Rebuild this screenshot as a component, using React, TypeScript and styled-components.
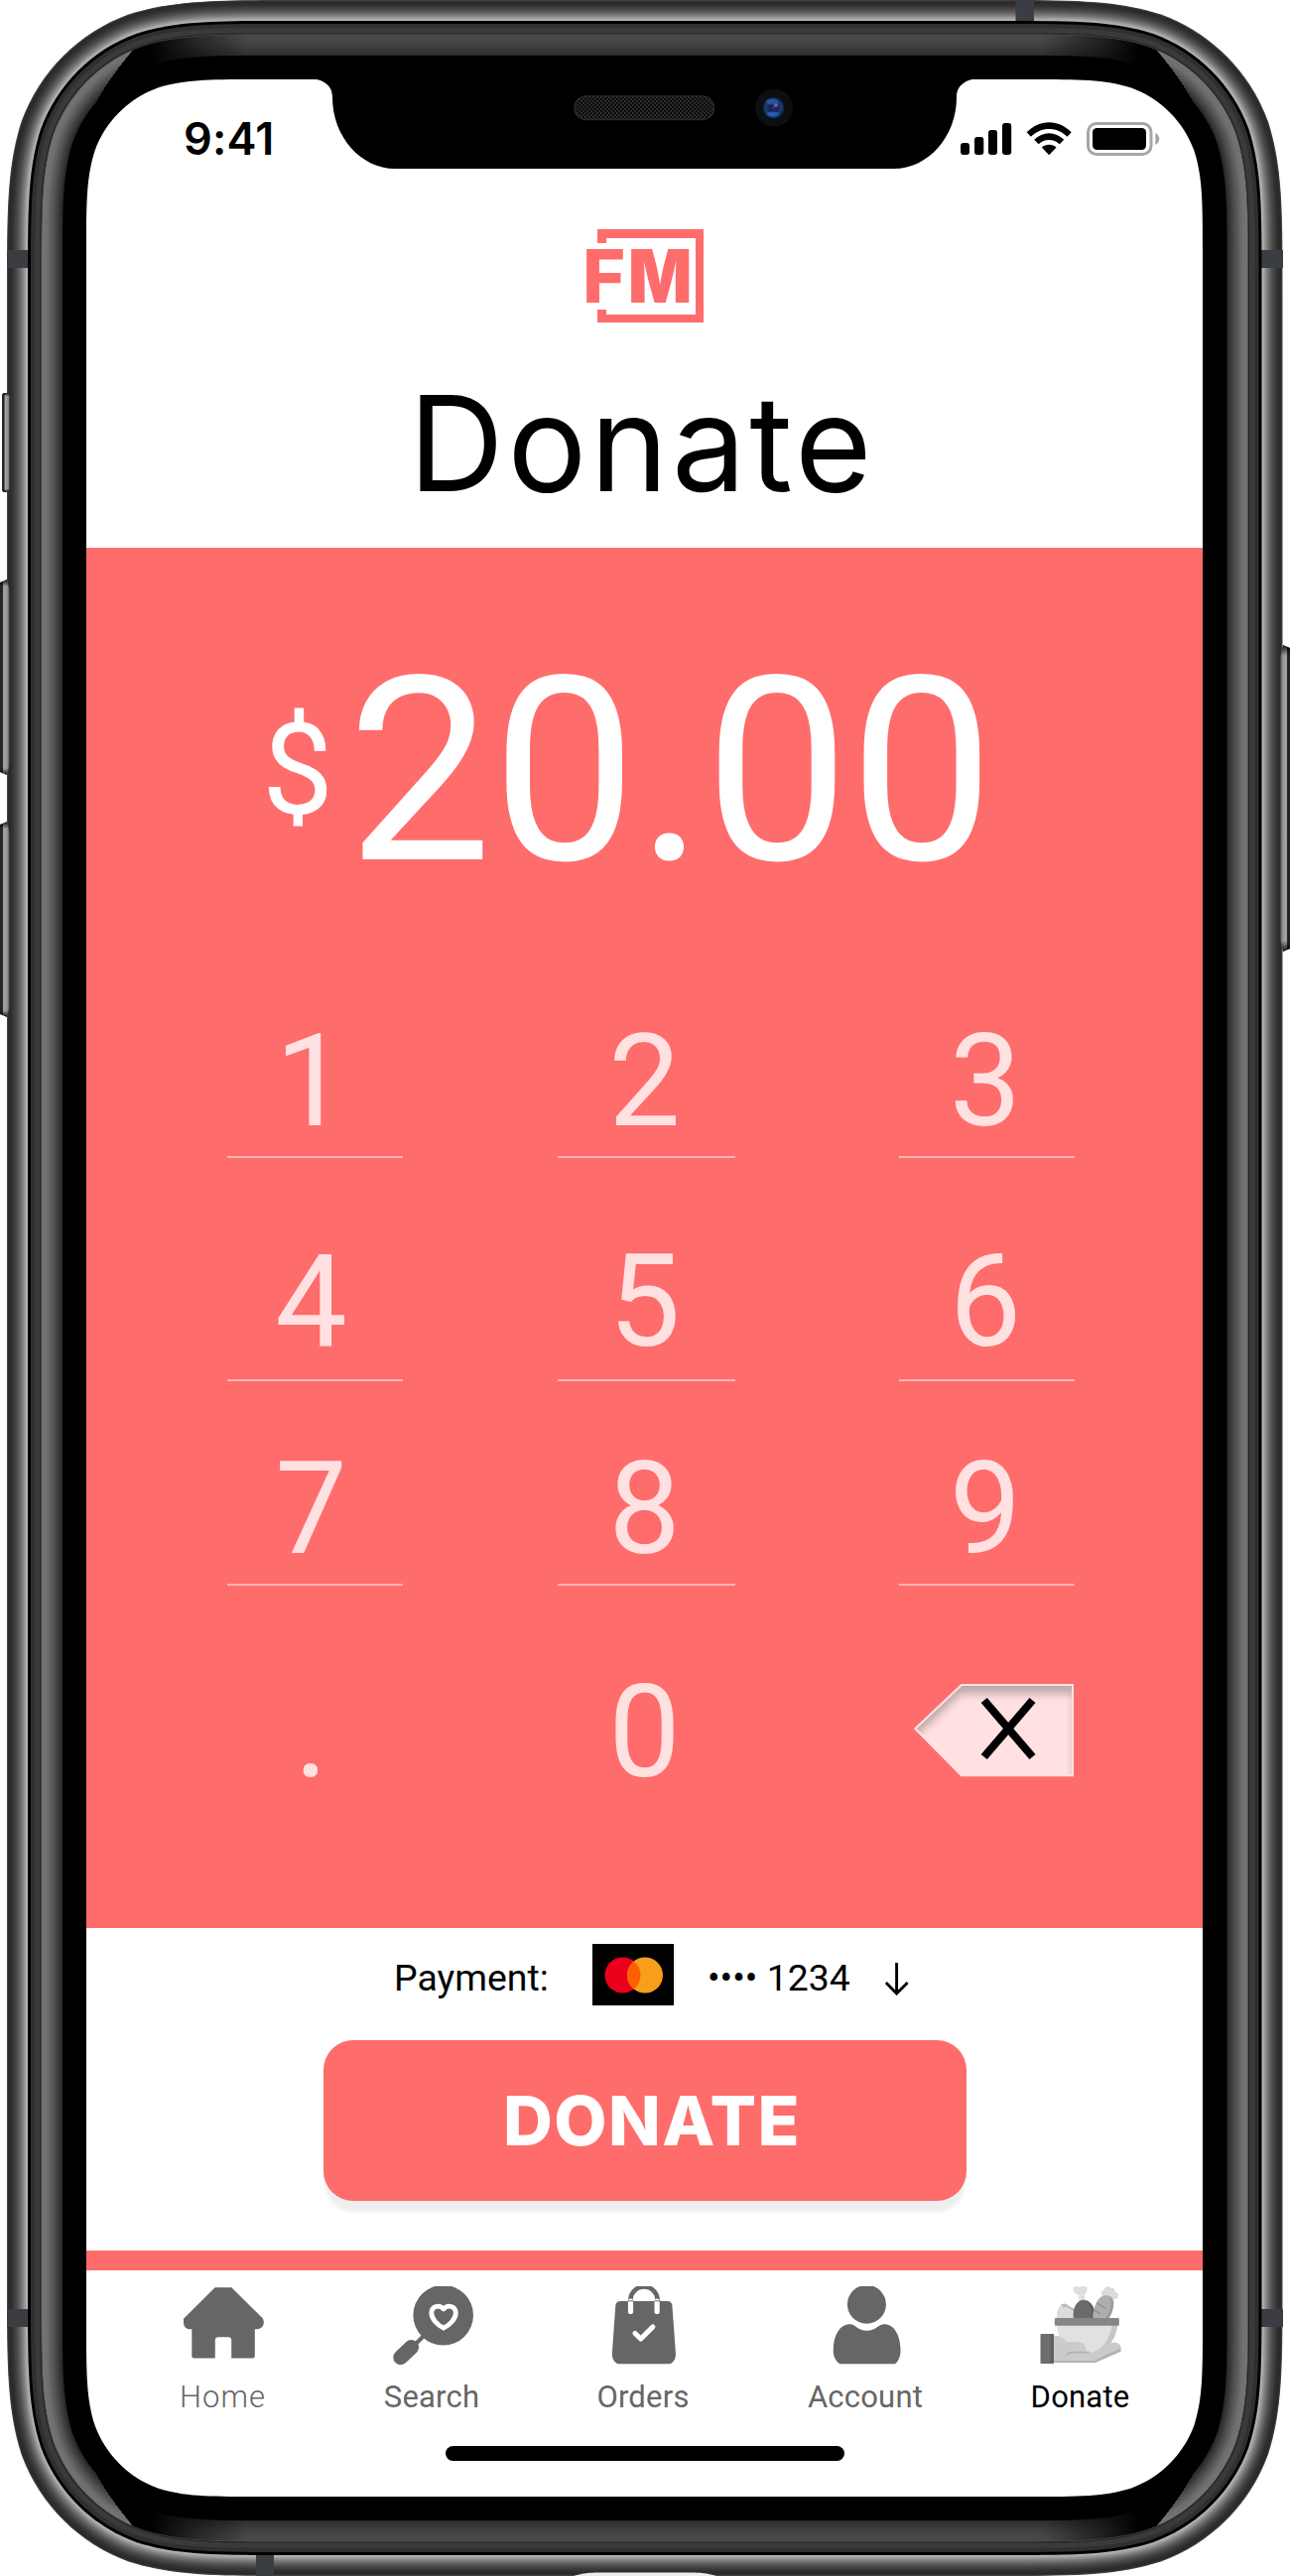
import React from "react";
import styled, { createGlobalStyle } from "styled-components";

const coral = "#ff6c6c";
const roboto = `Roboto, "Liberation Sans", sans-serif`;
const inter = `Inter, "Liberation Sans", sans-serif`;

const GlobalStyle = createGlobalStyle`
  *, *::before, *::after { box-sizing: border-box; }
  body { margin: 0; background: #fff; }
  button { border: 0; padding: 0; margin: 0; background: none; color: inherit; font: inherit; }
`;

/* ---------- geometry of the handset ---------- */

/* Continuous-curvature rounded rectangle. */
function squircle(x0: number, y0: number, x1: number, y1: number, r: number) {
  const a = 1.528665 * r;
  const b = 1.08849 * r;
  const c = 0.868407 * r;
  const d = 0.631494 * r;
  const e = 0.0749114 * r;
  const f = 0.372824 * r;
  const g = 0.1690596 * r;
  return [
    `M${x0 + a} ${y0}H${x1 - a}`,
    `C${x1 - b} ${y0} ${x1 - c} ${y0} ${x1 - d} ${y0 + e}`,
    `C${x1 - f} ${y0 + g} ${x1 - g} ${y0 + f} ${x1 - e} ${y0 + d}`,
    `C${x1} ${y0 + c} ${x1} ${y0 + b} ${x1} ${y0 + a}V${y1 - a}`,
    `C${x1} ${y1 - b} ${x1} ${y1 - c} ${x1 - e} ${y1 - d}`,
    `C${x1 - g} ${y1 - f} ${x1 - f} ${y1 - g} ${x1 - d} ${y1 - e}`,
    `C${x1 - c} ${y1} ${x1 - b} ${y1} ${x1 - a} ${y1}H${x0 + a}`,
    `C${x0 + b} ${y1} ${x0 + c} ${y1} ${x0 + d} ${y1 - e}`,
    `C${x0 + f} ${y1 - g} ${x0 + g} ${y1 - f} ${x0 + e} ${y1 - d}`,
    `C${x0} ${y1 - c} ${x0} ${y1 - b} ${x0} ${y1 - a}V${y0 + a}`,
    `C${x0} ${y0 + b} ${x0} ${y0 + c} ${x0 + e} ${y0 + d}`,
    `C${x0 + g} ${y0 + f} ${x0 + f} ${y0 + g} ${x0 + d} ${y0 + e}`,
    `C${x0 + c} ${y0} ${x0 + b} ${y0} ${x0 + a} ${y0}Z`,
  ].join("");
}

/* Outline at distance d outside the display edge. */
const shell = (d: number) => squircle(87 - d, 80 - d, 1212.5 + d, 2516 + d, 114 + d);

const displayClip =
  squircle(0, 0, 1125, 2436, 114) +
  "M222 -2C241 0 248 7 248 18C248 58 277 90 311 90H814C848 90 877 58 877 18C877 7 884 0 903 -2Z";

type Stop = [number, number[]];

function mix(stops: Stop[], d: number) {
  for (let i = 0; i < stops.length - 1; i++) {
    const [d0, c0] = stops[i];
    const [d1, c1] = stops[i + 1];
    if (d <= d0 && d >= d1) {
      const t = (d0 - d) / (d0 - d1);
      return `rgb(${c0.map((v, k) => Math.round(v + (c1[k] - v) * t)).join(",")})`;
    }
  }
  return "#000";
}

function range(from: number, to: number, step: number) {
  const out: number[] = [];
  for (let d = from; d >= to; d -= step) out.push(d);
  return out;
}

const steel: Stop[] = [
  [80, [72, 72, 72]],
  [78.5, [42, 42, 42]],
  [75, [50, 48, 48]],
  [70, [78, 76, 76]],
  [65, [122, 120, 120]],
  [61, [170, 168, 168]],
  [59, [190, 188, 188]],
];
const sideGlass: Stop[] = [
  [45, [116, 116, 116]],
  [40, [112, 112, 112]],
  [33, [82, 82, 82]],
  [24, [38, 38, 38]],
];
const endGlass: Stop[] = [
  [45, [74, 74, 74]],
  [38, [70, 70, 70]],
  [24, [46, 46, 46]],
];

const crescent = "M30 1300V190C30 120 70 78 134 50C112 75 96 100 86 125C72 155 64 190 64 260V1300Z";

/* ---------- styled parts ---------- */

const Phone = styled.div`
  position: relative;
  width: 1300px;
  height: 2596px;
  padding: 80px 88px 80px 87px;
  overflow: hidden;
`;

const Body = styled.svg`
  position: absolute;
  inset: 0;
`;

const Display = styled.main`
  position: relative;
  display: flex;
  flex-direction: column;
  width: 1125px;
  height: 2436px;
  background: #fff;
  clip-path: path(evenodd, "${displayClip}");
  font-family: ${roboto};
`;

const StatusBar = styled.div`
  display: flex;
  align-items: center;
  justify-content: space-between;
  height: 90px;
  padding: 29px 43px 0 98px;
`;

const Clock = styled.time`
  font: 600 45px/44px ${inter};
  letter-spacing: 0.2px;
`;

const Header = styled.header`
  display: flex;
  flex-direction: column;
  align-items: center;
  height: 382px;
  padding-top: 61px;
`;

const Title = styled.h1`
  margin: 56px 0 0 -5px;
  font: 400 133px/132px ${inter};
  letter-spacing: 3.6px;
  white-space: nowrap;
`;

const Pad = styled.section`
  height: 1391px;
  padding-top: 97px;
  background: ${coral};
  color: #fff;
`;

const Amount = styled.div`
  display: flex;
  align-items: flex-start;
  height: 376px;
  padding-left: 177px;
`;

const Currency = styled.span`
  width: 86px;
  margin-top: 63px;
  font-size: 128px;
  line-height: 129px;
`;

const Value = styled.span`
  font-size: 259.5px;
  line-height: 257px;
`;

const Keys = styled.div`
  display: grid;
  grid-template-columns: 177px 179px 177px;
  grid-template-rows: 222px 209px 225px 142px;
  column-gap: 156px;
  align-items: start;
  padding-left: 142px;

  & > :nth-child(3n) {
    margin-left: 9px;
    margin-right: -9px;
  }
`;

const Key = styled.button<{ $height?: number; $shift: number; $plain?: boolean }>`
  height: ${(p) => p.$height ?? 142}px;
  padding-right: ${(p) => p.$shift}px;
  border-bottom: ${(p) => (p.$plain ? "0" : "2px solid rgba(255, 255, 255, 0.5)")};
  color: rgba(255, 255, 255, 0.8);
  font-size: 129px;
  line-height: 129px;
  display: flex;
  justify-content: center;
`;

const EraseKey = styled.button`
  display: flex;
  justify-content: flex-end;
  padding-top: 15px;
`;

const Checkout = styled.section`
  display: flex;
  flex-direction: column;
  align-items: center;
  height: 325px;
  padding-top: 16px;
`;

const PaymentRow = styled.div`
  display: flex;
  align-items: center;
  width: 523px;
  height: 62px;
  margin-left: 16px;
  font-size: 37.4px;
  line-height: 40px;
  white-space: nowrap;
`;

const PaymentLabel = styled.span`
  width: 201px;
  margin-top: 6px;
  padding-left: 1px;
`;

const CardNumber = styled.span`
  width: 178px;
  margin: 6px 0 0 34px;
`;

const DonateButton = styled.button`
  width: 648px;
  height: 162px;
  margin-top: 35px;
  padding-left: 15px;
  border-radius: 30px;
  background: ${coral};
  box-shadow: 0 13px 4px -2px #eeeeee;
  color: #fff;
  font: 800 69px/68px ${inter};
  letter-spacing: 1.4px;
`;

const TabBar = styled.nav`
  display: grid;
  grid-template-columns: 212px 210px 215px 234px 197px;
  height: 197px;
  padding: 16px 0 0 32px;
  border-top: 20px solid ${coral};
`;

const Tab = styled.a<{ $active?: boolean }>`
  display: flex;
  flex-direction: column;
  align-items: center;
  color: ${(p) => (p.$active ? "#000" : "#666")};
`;

const TabLabel = styled.span<{ $weight?: number; $spacing?: number; $nudge?: number }>`
  margin-top: 17px;
  margin-left: ${(p) => p.$nudge ?? 0}px;
  font-size: 31px;
  line-height: 32px;
  font-weight: ${(p) => p.$weight ?? 400};
  letter-spacing: ${(p) => p.$spacing ?? 0.2}px;
`;

const HomeIndicator = styled.div`
  width: 402px;
  height: 15px;
  margin-left: 362px;
  border-radius: 8px;
  background: #000;
`;

/* ---------- drawings ---------- */

function Handset() {
  const flips = ["", "translate(1299.5 0) scale(-1 1)", "translate(0 2596) scale(1 -1)", "translate(1299.5 2596) scale(-1 -1)"];
  return (
    <Body width="1300" height="2596" viewBox="0 0 1300 2596" aria-hidden="true">
      <defs>
        <clipPath id="sides">
          {flips.map((t) => (
            <path key={t} d={crescent} transform={t || undefined} />
          ))}
        </clipPath>
        <linearGradient id="cornerFade" x1="0" x2="1">
          <stop offset="0.09" stopColor="#000" />
          <stop offset="0.125" stopColor="#000" stopOpacity="0.5" />
          <stop offset="0.17" stopColor="#000" stopOpacity="0" />
          <stop offset="0.83" stopColor="#000" stopOpacity="0" />
          <stop offset="0.875" stopColor="#000" stopOpacity="0.5" />
          <stop offset="0.91" stopColor="#000" />
        </linearGradient>
        <linearGradient id="buttonL" x1="0" x2="1">
          <stop offset="0" stopColor="#222" />
          <stop offset="0.28" stopColor="#2a2a2a" />
          <stop offset="0.36" stopColor="#aaa" />
          <stop offset="0.8" stopColor="#8a8a8a" />
          <stop offset="1" stopColor="#222" />
        </linearGradient>
        <linearGradient id="buttonR" x1="1" x2="0">
          <stop offset="0" stopColor="#1c1c1c" />
          <stop offset="0.28" stopColor="#2a2a2a" />
          <stop offset="0.36" stopColor="#aaa" />
          <stop offset="0.8" stopColor="#8a8a8a" />
          <stop offset="1" stopColor="#333" />
        </linearGradient>
        <linearGradient id="buttonEnds" x1="0" y1="0" x2="0" y2="1">
          <stop offset="0" stopColor="#000" stopOpacity="0.9" />
          <stop offset="0.035" stopColor="#000" stopOpacity="0" />
          <stop offset="0.965" stopColor="#000" stopOpacity="0" />
          <stop offset="1" stopColor="#000" stopOpacity="0.9" />
        </linearGradient>
        <pattern id="mesh" width="4" height="4" patternUnits="userSpaceOnUse">
          <rect width="4" height="4" fill="#0b0b0b" />
          <path d="M0 0L4 4M4 0L0 4" stroke="#333" strokeWidth="0.8" />
        </pattern>
        <radialGradient id="lens">
          <stop offset="0" stopColor="#3a2a80" />
          <stop offset="0.35" stopColor="#14204e" />
          <stop offset="0.7" stopColor="#1a3f7c" />
          <stop offset="1" stopColor="#0d1b38" />
        </radialGradient>
      </defs>

      {range(80, 59.5, 0.5).map((d) => (
        <path key={d} d={shell(d)} fill={mix(steel, d)} />
      ))}
      <g fill="#3a3e42">
        <rect x="7" y="252" width="24" height="18" />
        <rect x="1269" y="252" width="24" height="18" />
        <rect x="7" y="2327" width="24" height="18" />
        <rect x="1269" y="2327" width="24" height="18" />
        <rect x="1023.5" y="0" width="18.5" height="24" />
        <rect x="258" y="2572" width="18" height="24" />
      </g>
      <path d="M578 2596C588 2593 594 2592.5 604 2592.5H696C706 2592.5 712 2593 722 2596Z" fill="#eee" />

      <path d={shell(59)} fill="#000" />
      <path d={shell(56)} fill="#2f2f2f" />
      <path d={shell(52)} fill="#3a3a3a" />
      <path d={shell(46.5)} fill="#1f1f1f" />
      <path d={shell(45.5)} fill="#5c5c5c" />
      {range(45, 24.5, 0.5).map((d) => (
        <path key={d} d={shell(d)} fill={mix(endGlass, d)} />
      ))}
      <path d={shell(45)} fill="url(#cornerFade)" />
      <g clipPath="url(#sides)">
        {range(45, 24.5, 0.5).map((d) => (
          <path key={d} d={shell(d)} fill={mix(sideGlass, d)} />
        ))}
      </g>
      <path d={shell(24)} fill="#000" />

      <rect x="2" y="396" width="8" height="100" rx="3" fill="url(#buttonL)" />
      <rect x="2" y="396" width="8" height="100" rx="3" fill="url(#buttonEnds)" />
      {[584, 828].map((y) => (
        <g key={y}>
          <path d={`M0 ${y + 3}L7 ${y}L10 ${y + 12}V${y + 185}L7 ${y + 197}L0 ${y + 194}Z`} fill="url(#buttonL)" />
          <path d={`M0 ${y + 3}L7 ${y}L10 ${y + 12}V${y + 185}L7 ${y + 197}L0 ${y + 194}Z`} fill="url(#buttonEnds)" />
        </g>
      ))}
      <path d="M1300 653L1293 650L1290 662V947L1293 959L1300 956Z" fill="url(#buttonR)" />
      <path d="M1300 653L1293 650L1290 662V947L1293 959L1300 956Z" fill="url(#buttonEnds)" />

      <rect x="579" y="97" width="140.5" height="23.5" rx="11.7" fill="url(#mesh)" stroke="#2a2a2a" strokeWidth="1.5" />
      <circle cx="780" cy="108.7" r="19" fill="#0d0e11" />
      <circle cx="779.5" cy="108.7" r="11" fill="url(#lens)" />
      <ellipse cx="778" cy="102.5" rx="6" ry="3" fill="#3f7fc0" opacity="0.45" />
      <ellipse cx="779" cy="115" rx="6" ry="2.6" fill="#2f6fd0" opacity="0.65" />
      <circle cx="782" cy="106" r="2" fill="#8a6ad0" opacity="0.8" />
    </Body>
  );
}

function StatusIcons() {
  return (
    <svg width="202" height="36" viewBox="967 122 202 36" role="img" aria-label="Signal, Wi-Fi, battery">
      <rect x="968" y="144" width="9" height="12" rx="3" />
      <rect x="982" y="138" width="9.3" height="18" rx="3" />
      <rect x="996" y="131" width="9" height="25" rx="3" />
      <rect x="1010" y="124" width="9.2" height="32" rx="3" />
      <path d="M1034.7 133.2C1047.6 119.8 1066.8 119.8 1079.7 133.2L1075.5 137.7C1065.2 127.3 1049.2 127.3 1038.9 137.7Z" />
      <path d="M1042.2 140.8C1050.8 132.1 1063.6 132.1 1072.2 140.8L1067.8 145.3C1062 139.5 1052.4 139.5 1046.6 145.3Z" />
      <path d="M1049.8 148.6C1054 144.8 1060.4 144.8 1064.6 148.6L1057.2 156.2Z" />
      <rect x="1096.5" y="124.5" width="63.5" height="31" rx="8.5" fill="none" stroke="#a6a6a6" strokeWidth="3" />
      <rect x="1101" y="129" width="54" height="22" rx="4.5" />
      <path d="M1164.3 134C1166.8 135.2 1168.3 137.5 1168.3 140C1168.3 142.5 1166.8 144.8 1164.3 146Z" fill="#a6a6a6" />
    </svg>
  );
}

const LogoText = styled.text<{ $weight: number }>`
  font: ${(p) => p.$weight} 74px ${inter};
`;

function Logo() {
  return (
    <svg width="150" height="94" viewBox="575 231 150 94" fill={coral} overflow="visible" role="img" aria-label="FM">
      <path d="M602 231H709V325H602V312H611V317H701V240H611V245H602Z" />
      <LogoText $weight={800} x="587" y="305">F</LogoText>
      <LogoText $weight={900} transform="translate(633 305) scale(0.91 1)">M</LogoText>
    </svg>
  );
}

function EraseIcon() {
  const shape = "M921 1742L968.5 1697H1082V1790H968.5Z";
  return (
    <svg width="163" height="95" viewBox="920 1696 163 95" aria-label="Erase">
      <defs>
        <clipPath id="eraseShape">
          <path d={shape} />
        </clipPath>
        <filter id="soft" x="-20%" y="-20%" width="140%" height="140%">
          <feGaussianBlur stdDeviation="4.5" />
        </filter>
      </defs>
      <path d={shape} fill="#ffe1e1" />
      <g clipPath="url(#eraseShape)">
        <path
          d="M880 1660H1120V1830H880ZM921 1752L968.5 1707H1082V1800H968.5Z"
          fillRule="evenodd"
          fill="#000"
          opacity="0.25"
          filter="url(#soft)"
        />
      </g>
      <path d="M922.4 1742L969 1698H1081V1789.2H969Z" fill="none" stroke="#ffe1e1" strokeWidth="2" />
      <path d="M991.7 1713.5L1040.5 1770.5M1040.5 1713.5L991.7 1770.5" stroke="#000" strokeWidth="8" />
    </svg>
  );
}

function CardLogo() {
  return (
    <svg width="82" height="62" viewBox="597 1959 82 62" role="img" aria-label="Mastercard">
      <rect x="597" y="1959" width="82" height="62" />
      <circle cx="627.5" cy="1990.5" r="18" fill="#eb001b" />
      <circle cx="650" cy="1990.5" r="18" fill="#f79e1b" />
      <path d="M638.75 1976.45A18 18 0 0 1 638.75 2004.55A18 18 0 0 1 638.75 1976.45Z" fill="#ff5f00" />
    </svg>
  );
}

const Arrow = styled.svg`
  margin-top: 7px;
`;

function DownArrow() {
  return (
    <Arrow width="26" height="34" viewBox="891 1977 26 34" fill="none" stroke="#000" strokeWidth="2.9" aria-hidden="true">
      <path d="M903.6 1978V2009M892.9 1998L903.6 2009L914.6 1998" strokeLinejoin="miter" />
    </Arrow>
  );
}

const Icon = styled.svg.attrs({ width: 82, height: 79, fill: "#666", "aria-hidden": true })``;

const HomeIcon = () => (
  <Icon viewBox="184 2304 82 79">
    <path d="M216.7 2305.3H233.3L264 2335.6C265.3 2337 265.8 2338.5 265.8 2340.5C265.8 2344.5 262.5 2347.3 258.5 2347.3H256.8V2374.5Q256.8 2376.5 254.8 2376.5H233.2V2358.5Q233.2 2355.2 230 2355.2H220Q216.8 2355.2 216.8 2358.5V2376.5H195.3Q193.3 2376.5 193.3 2374.5V2347.3H191.5C187.5 2347.3 185 2344.5 185 2340.5V2336.8Z" />
  </Icon>
);

const SearchIcon = () => (
  <Icon viewBox="395 2304 82 79">
    <circle cx="446.7" cy="2333.2" r="30.3" />
    <path d="M427 2354L418 2363" stroke="#666" strokeWidth="4" />
    <path d="M414.5 2365.5L403.8 2375.6" stroke="#666" strokeWidth="15" strokeLinecap="round" />
    <path
      d="M447 2346C441 2343.3 434.8 2337 434.8 2331C434.8 2324.5 442.5 2321.5 447 2327C451.5 2321.5 459.3 2324.5 459.3 2331C459.3 2337 453 2343.3 447 2346Z"
      fill="none"
      stroke="#fff"
      strokeWidth="4.8"
      strokeLinejoin="round"
    />
  </Icon>
);

const OrdersIcon = () => (
  <Icon viewBox="607.5 2304 82 79">
    <path d="M625 2319H672Q676.6 2319 676.9 2323.5L680.4 2371C680.8 2377 678.5 2380.5 675 2382.3H622C618.5 2380.5 616 2377 616.4 2371L619.8 2323.5Q620.2 2319 625 2319Z" />
    <path d="M635 2319V2317.5A13.5 13 0 0 1 662 2317.5V2319" fill="none" stroke="#666" strokeWidth="4.6" />
    <path d="M635 2319V2329.5M661.6 2319V2329.5M639.5 2351.5L645.2 2357L657.3 2345" fill="none" stroke="#fff" strokeWidth="5.2" strokeLinecap="round" strokeLinejoin="round" />
    <path d="M632 2318.8H638M659 2318.8H665" stroke="#666" strokeWidth="1" />
  </Icon>
);

const AccountIcon = () => (
  <Icon viewBox="832 2304 82 79">
    <circle cx="873.4" cy="2322.3" r="19.5" />
    <path d="M846.3 2382.3C841.5 2379 839.5 2374 839.8 2367C840.5 2352 847 2342.3 856.5 2342.3C862 2342.3 864.5 2348.8 873.5 2348.8C882.5 2348.8 885.5 2342.3 891 2342.3C900.5 2342.3 906.8 2352 907.5 2367C907.8 2374 906 2379 902 2382.3Z" />
  </Icon>
);

const DonateIcon = () => (
  <Icon viewBox="52.5 42 246 237">
    <path d="M104 140C101 118 110 104 118 97C126 93 134 96 138 100L156 112V140Z" fill="#dcdcdc" />
    <path d="M116 98C126 91 136 97 138 101L156 110V118C144 110 134 104 122 105Z" fill="#bdbdbd" />
    <path d="M170 88V70C158 66 151 58 153 48C158 40 168 42 173 45C180 41 192 40 195 47C197 58 190 64 187 70L190 88Z" fill="#dedede" />
    <path d="M154 140C149 106 166 83 184 83C206 83 222 108 218 140Z" fill="#6b6b6b" />
    <path d="M190 84C210 90 221 112 218 140H208C214 116 206 96 190 84Z" fill="#5b5b5b" />
    <path d="M244 73C236 66 235 56 246 54C250 41 262 42 267 48C276 44 281 52 278 59C288 59 294 68 287 77C281 83 270 82 262 80Z" fill="#dadada" />
    <path d="M213 140C211 112 226 73 248 70C266 67 280 80 275 99C272 118 266 130 260 140Z" fill="#aeaeae" />
    <path d="M264 74C282 86 275 119 260 140H250C264 120 272 98 264 74Z" fill="#9a9a9a" />
    <path d="M226 94L250 108M217 115L234 124" stroke="#8b8b8b" strokeWidth="4" strokeLinecap="round" />
    <path d="M103 160C106 208 142 244 190 244C244 244 282 210 287 160Z" fill="#e1e1e1" />
    <path d="M270 160C264 203 243 232 212 243L230 238C262 228 284 198 287 160Z" fill="#c6c6c6" />
    <rect x="97" y="138" width="195" height="23" rx="3" fill="#868686" />
    <path d="M94 192C112 190 124 197 132 210H164C184 210 194 222 193 241H214L262 215C280 208 297 216 297 226V238L219 273H94Z" fill="#cbcbcb" />
    <path d="M297 229L216 267H94V273H220L297 239Z" fill="#b3b3b3" />
    <path d="M134 250C138 242 144 242 154 242H200" fill="none" stroke="#b3b3b3" strokeWidth="5" strokeLinecap="round" />
    <rect x="54" y="186" width="40" height="90" rx="2" fill="#6e6e6e" />
    <rect x="84" y="187" width="10" height="88" fill="#5f5f5f" />
  </Icon>
);

/* ---------- page ---------- */

const keyRows = [
  { keys: ["1", "2", "3"] },
  { keys: ["4", "5", "6"], height: 145 },
  { keys: ["7", "8", "9"] },
  { keys: [".", "0"], plain: true },
];
const shifts = [8, 4, 3];

const tabs = [
  { label: "Home", icon: <HomeIcon />, weight: 300, spacing: 1.1, nudge: -1 },
  { label: "Search", icon: <SearchIcon />, nudge: -2 },
  { label: "Orders", icon: <OrdersIcon />, nudge: -1 },
  { label: "Account", icon: <AccountIcon />, nudge: -2 },
  { label: "Donate", icon: <DonateIcon />, active: true },
];

export default function App() {
  return (
    <Phone>
      <GlobalStyle />
      <Handset />
      <Display>
        <StatusBar>
          <Clock>9:41</Clock>
          <StatusIcons />
        </StatusBar>
        <Header>
          <Logo />
          <Title>Donate</Title>
        </Header>
        <Pad>
          <Amount>
            <Currency>$</Currency>
            <Value>20.00</Value>
          </Amount>
          <Keys>
            {keyRows.map((row) =>
              row.keys.map((k, i) => (
                <Key key={k} $height={row.height} $shift={shifts[i]} $plain={row.plain}>
                  {k}
                </Key>
              ))
            )}
            <EraseKey>
              <EraseIcon />
            </EraseKey>
          </Keys>
        </Pad>
        <Checkout>
          <PaymentRow>
            <PaymentLabel>Payment:</PaymentLabel>
            <CardLogo />
            <CardNumber>•••• 1234</CardNumber>
            <DownArrow />
          </PaymentRow>
          <DonateButton>DONATE</DonateButton>
        </Checkout>
        <TabBar>
          {tabs.map((t) => (
            <Tab key={t.label} $active={t.active}>
              {t.icon}
              <TabLabel $weight={t.weight} $spacing={t.spacing} $nudge={t.nudge}>
                {t.label}
              </TabLabel>
            </Tab>
          ))}
        </TabBar>
        <HomeIndicator />
      </Display>
    </Phone>
  );
}
